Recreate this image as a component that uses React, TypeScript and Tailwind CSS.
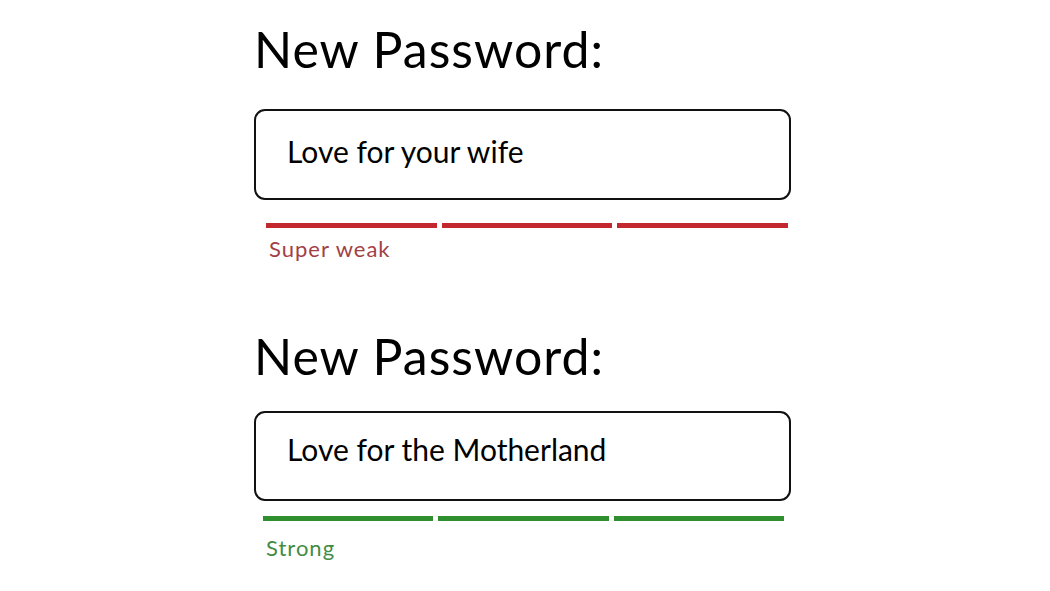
import React from "react";

type Field = {
  value: string;
  label: string;
  bar: string;
  text: string;
  boxGap: string;
  boxH: string;
  textPad: string;
  barGap: string;
  barX: string;
  barW: string;
  labelGap: string;
  labelX: string;
};

const fields: Field[] = [
  {
    value: "Love for your wife",
    label: "Super weak",
    bar: "bg-[#c3282e]",
    text: "text-[#a23f46]",
    boxGap: "mt-[32px]",
    boxH: "h-[91px]",
    textPad: "pt-[22px]",
    barGap: "mt-[23px]",
    barX: "ml-[12px]",
    barW: "w-[522px]",
    labelGap: "mt-[8px]",
    labelX: "ml-[15px]",
  },
  {
    value: "Love for the Motherland",
    label: "Strong",
    bar: "bg-[#2f8f2f]",
    text: "text-[#448c44]",
    boxGap: "mt-[27px]",
    boxH: "h-[90px]",
    textPad: "pt-[18px]",
    barGap: "mt-[15px]",
    barX: "ml-[9px]",
    barW: "w-[521px]",
    labelGap: "mt-[14px]",
    labelX: "ml-[12px]",
  },
];

function PasswordField({ f }: { f: Field }) {
  return (
    <div className="flex flex-col">
      <h2 className="text-[50px] leading-[56px] tracking-[1px] text-black">New Password:</h2>
      <div
        className={`${f.boxGap} ${f.boxH} ${f.textPad} w-[537px] rounded-[11px] border-2 border-[#111] flex items-start pl-[31px]`}
      >
        <span className="text-[30px] leading-[36px] text-black">{f.value}</span>
      </div>
      <div className={`${f.barGap} ${f.barX} ${f.barW} flex gap-[5px]`}>
        <div className={`h-[5px] flex-1 ${f.bar}`} />
        <div className={`h-[5px] flex-1 ${f.bar}`} />
        <div className={`h-[5px] flex-1 ${f.bar}`} />
      </div>
      <span className={`${f.labelGap} ${f.labelX} text-[22px] leading-[26px] tracking-[1px] ${f.text}`}>
        {f.label}
      </span>
    </div>
  );
}

export default function App() {
  return (
    <div
      className="w-[1050px] h-[591px] bg-white overflow-hidden pl-[254px] pt-[21px] flex flex-col"
      style={{ fontFamily: "Lato, 'Open Sans', sans-serif" }}
    >
      <PasswordField f={fields[0]} />
      <div className="mt-[66px]">
        <PasswordField f={fields[1]} />
      </div>
    </div>
  );
}
